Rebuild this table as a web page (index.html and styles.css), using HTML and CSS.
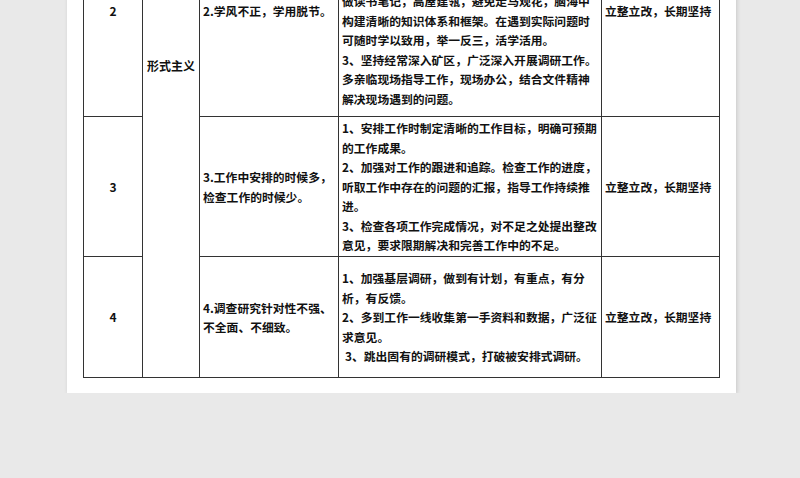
FILE: index.html
```html
<!DOCTYPE html>
<html lang="zh-CN">
<head>
<meta charset="utf-8">
<title>整改清单</title>
<link rel="stylesheet" href="styles.css">
</head>
<body>
<div class="page">
  <table class="sheet">
    <colgroup>
      <col class="c-no">
      <col class="c-type">
      <col class="c-issue">
      <col class="c-measure">
      <col class="c-term">
    </colgroup>
    <tbody>
      <tr class="r1">
        <td class="center">1</td>
        <td class="center" rowspan="4">形式主义</td>
        <td>1.理论学习不够深入，学用结合不紧密。</td>
        <td>
          <p>1、加强政治理论学习，坚持每天自学，认真学习各项方针政策。</p>
          <p>2、结合工作实际开展专题研讨，做到学以致用。</p>
        </td>
        <td>立整立改，长期坚持</td>
      </tr>
      <tr class="r2">
        <td class="center">2</td>
        <td>2.学风不正，学用脱节。</td>
        <td>
          <p>1、加强政治理论学习，坚持每天自学不少于一小时，认真学习党的各项方针政策，不断提高自身政治素养和业务能力。</p>
          <p>2、制定学习计划，定期开展集中学习，勤思考，做读书笔记，高屋建瓴，避免走马观花，脑海中构建清晰的知识体系和框架。在遇到实际问题时可随时学以致用，举一反三，活学活用。</p>
          <p>3、坚持经常深入矿区，广泛深入开展调研工作。多亲临现场指导工作，现场办公，结合文件精神解决现场遇到的问题。</p>
        </td>
        <td>立整立改，长期坚持</td>
      </tr>
      <tr class="r3">
        <td class="center">3</td>
        <td>3.工作中安排的时候多，检查工作的时候少。</td>
        <td>
          <p>1、安排工作时制定清晰的工作目标，明确可预期的工作成果。</p>
          <p>2、加强对工作的跟进和追踪。检查工作的进度，听取工作中存在的问题的汇报，指导工作持续推进。</p>
          <p>3、检查各项工作完成情况，对不足之处提出整改意见，要求限期解决和完善工作中的不足。</p>
        </td>
        <td>立整立改，长期坚持</td>
      </tr>
      <tr class="r4">
        <td class="center">4</td>
        <td>4.调查研究针对性不强、不全面、不细致。</td>
        <td>
          <p>1、加强基层调研，做到有计划，有重点，有分析，有反馈。</p>
          <p>2、多到工作一线收集第一手资料和数据，广泛征求意见。</p>
          <p class="indent">3、跳出固有的调研模式，打破被安排式调研。</p>
        </td>
        <td>立整立改，长期坚持</td>
      </tr>
    </tbody>
  </table>
</div>
</body>
</html>
```

FILE: styles.css
```css
html, body {
  margin: 0;
  padding: 0;
}

body {
  background: #e9e9e9;
  font-family: "Noto Sans CJK SC", "Noto Sans", sans-serif;
  color: #111;
}

.page {
  width: 669px;
  box-sizing: border-box;
  margin: -247px 0 0 67px;
  padding: 0 16px 15px 16px;
  background: #fff;
  box-shadow: 1px 1px 4px rgba(0, 0, 0, 0.14);
}

.sheet {
  border-collapse: collapse;
  table-layout: fixed;
  width: 637px;
}

.c-no { width: 59px; }
.c-type { width: 57px; }
.c-issue { width: 139px; }
.c-measure { width: 263px; }
.c-term { width: 118px; }

.sheet td {
  border: 1px solid #333;
  font-size: 11.8px;
  font-weight: 700;
  line-height: 19.5px;
  padding: 0 1px 0 3px;
  vertical-align: middle;
  text-align: left;
}

.sheet td.center {
  text-align: center;
  padding: 0;
  font-size: 12px;
}

.sheet p {
  margin: 0;
}

.sheet p.indent {
  padding-left: 3px;
}

.r1 { height: 151px; }
.r2 { height: 212px; }
.r3 { height: 140px; }
.r4 { height: 121px; }
```
